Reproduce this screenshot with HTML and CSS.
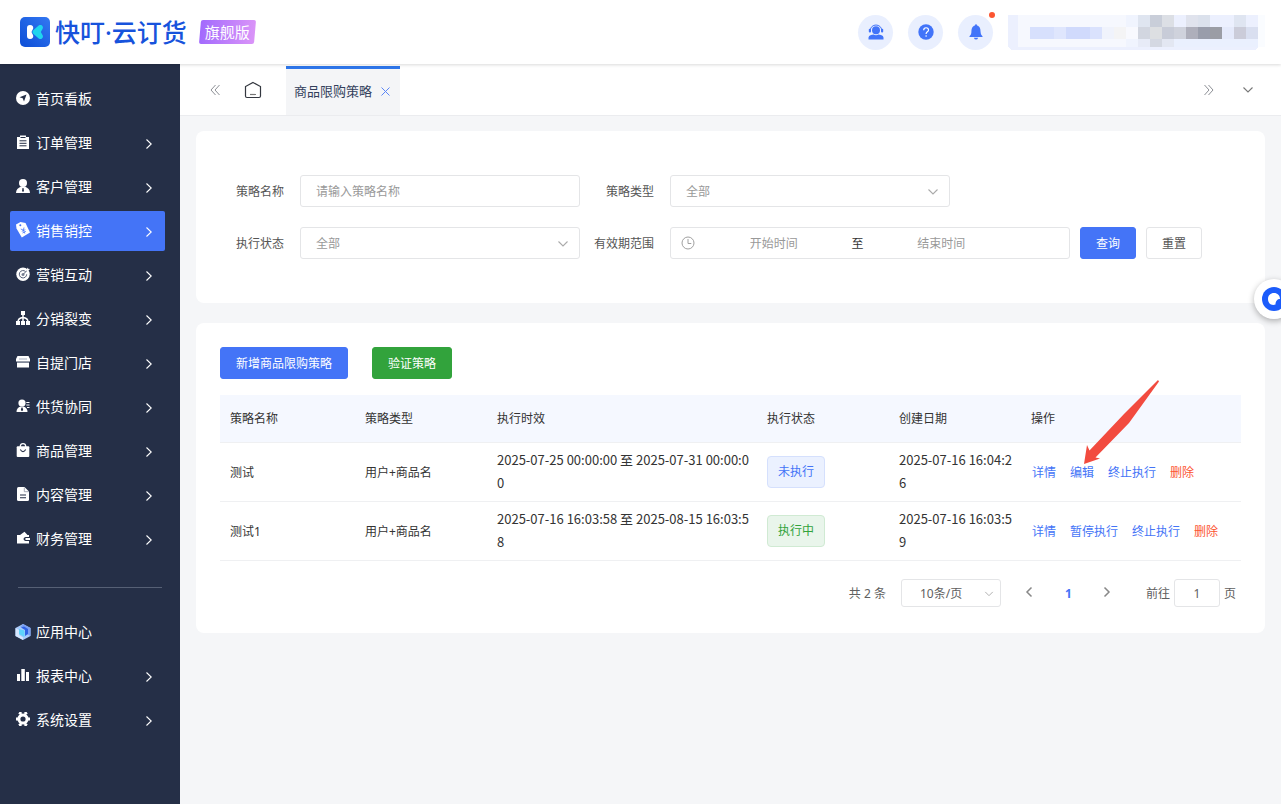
FILE: index.html
```html
<!DOCTYPE html>
<html lang="zh-CN">
<head>
    <meta charset="UTF-8">
    <meta name="viewport" content="width=device-width, initial-scale=1.0">
    <title>商品限购策略</title>
    <link rel="stylesheet" href="styles.css">
</head>
<body>
    <svg class="symbols" aria-hidden="true">
        <symbol id="arrow-right" viewBox="0 0 8 12"><path d="M1.5 1.5 L6.2 6 L1.5 10.5" fill="none" stroke="currentColor" stroke-width="1.1"/></symbol>
        <symbol id="arrow-down" viewBox="0 0 12 8"><path d="M1.5 1.5 L6 6 L10.5 1.5" fill="none" stroke="currentColor" stroke-width="1.1"/></symbol>
    </svg>

    <header class="header">
        <a class="brand" href="#">
            <svg class="brand-logo" viewBox="0 0 30 30">
                <defs>
                    <linearGradient id="logoBg" x1="1" y1="0" x2="0" y2="1">
                        <stop offset="0" stop-color="#3378f2"/>
                        <stop offset="1" stop-color="#0d4ed6"/>
                    </linearGradient>
                </defs>
                <rect width="30" height="30" rx="5" fill="url(#logoBg)"/>
                <path d="M10 8 C12.5 8 13.5 9.5 13.2 11.5 L11.5 15 L13.2 18.5 C13.5 20.5 12.5 22 10 22 C8 22 7 20.8 7 19 V11 C7 9.2 8 8 10 8 Z" fill="#fff"/>
                <path d="M19 8.3 C21.5 7 24 9.5 22.5 12 L20.8 15 L22.5 18 C24 20.5 21.5 23 19 21.7 L13.5 17 C12 15.6 12 14.4 13.5 13 Z" fill="#1fd5ee"/>
            </svg>
            <span class="brand-name">快叮·云订货</span>
            <span class="brand-badge">旗舰版</span>
        </a>
        <div class="header-tools">
            <button class="tool" aria-label="客服">
                <svg width="16" height="16" viewBox="0 0 16 16" fill="#4274f9">
                    <circle cx="8" cy="6.2" r="4"/>
                    <path d="M2.3 6.5 C2.3 -0.8 13.7 -0.8 13.7 6.5" fill="none" stroke="#4274f9" stroke-width="1"/>
                    <rect x="0.8" y="4.8" width="2.2" height="3.6" rx="1"/><rect x="13" y="4.8" width="2.2" height="3.6" rx="1"/>
                    <path d="M0.5 15.5 V13.5 Q0.5 11.5 3 11 L5.5 10.5 Q8 12 10.5 10.5 L13 11 Q15.5 11.5 15.5 13.5 V15.5 Z"/>
                </svg>
            </button>
            <button class="tool" aria-label="帮助">
                <svg width="16" height="16" viewBox="0 0 16 16">
                    <circle cx="8" cy="8" r="7.7" fill="#4274f9"/>
                    <path d="M5.7 6.2 C5.7 3 10.5 3 10.5 6 C10.5 7.8 8.1 7.9 8.1 9.9" fill="none" stroke="#fff" stroke-width="1.2"/>
                    <circle cx="8.1" cy="12" r="0.8" fill="#fff"/>
                </svg>
            </button>
            <button class="tool" aria-label="消息">
                <svg width="16" height="16" viewBox="0 0 16 16" fill="#4274f9">
                    <path d="M8 0.3 Q9 0.3 9 1.5 C12 2.2 12.5 5 12.6 8 C12.7 10 13.2 11 14.5 12.2 V13 H1.5 V12.2 C2.8 11 3.3 10 3.4 8 C3.5 5 4 2.2 7 1.5 Q7 0.3 8 0.3 Z"/>
                    <path d="M5.8 13.7 H10.2 Q9.5 15.6 8 15.6 Q6.5 15.6 5.8 13.7 Z"/>
                </svg>
                <span class="tool-dot"></span>
            </button>
            <svg class="account" width="257" height="35" viewBox="0 0 257 35" shape-rendering="crispEdges">
                <path d="M0 0 H250 V32 L247 35 H4 L0 32 Z" fill="#ecf0fe"/>
                <rect x="10" y="0" width="108" height="32" fill="#f6f8fe"/>
                <rect x="118" y="0" width="12" height="12" fill="#f0f4fe"/>
                <rect x="118" y="24" width="12" height="8" fill="#f0f4fe"/>
                <rect x="22" y="12" width="24" height="12" fill="#d7e0fd"/>
                <rect x="46" y="12" width="12" height="12" fill="#dfe6fd"/>
                <rect x="58" y="12" width="36" height="12" fill="#d0dafc"/>
                <rect x="82" y="12" width="12" height="12" fill="#dae2fd"/>
                <rect x="94" y="12" width="12" height="12" fill="#f0f3fc"/>
                <rect x="106" y="12" width="12" height="12" fill="#f4f4f5"/>
                <rect x="118" y="12" width="12" height="12" fill="#f8f9fe"/>
                <rect x="130" y="0" width="12" height="12" fill="#dfe5f0"/>
                <rect x="142" y="0" width="12" height="12" fill="#c9ced9"/>
                <rect x="154" y="0" width="12" height="12" fill="#dcdfe5"/>
                <rect x="178" y="0" width="12" height="12" fill="#e0e3ed"/>
                <rect x="190" y="0" width="12" height="12" fill="#dbe1ec"/>
                <rect x="226" y="0" width="12" height="12" fill="#dfe5f1"/>
                <rect x="130" y="12" width="12" height="12" fill="#d2d6e0"/>
                <rect x="142" y="12" width="12" height="12" fill="#dddfe2"/>
                <rect x="154" y="12" width="12" height="12" fill="#c8ccd8"/>
                <rect x="166" y="12" width="12" height="12" fill="#cfd2dc"/>
                <rect x="178" y="12" width="12" height="12" fill="#aeafbb"/>
                <rect x="190" y="12" width="12" height="12" fill="#999dab"/>
                <rect x="202" y="12" width="12" height="12" fill="#9b9da5"/>
                <rect x="214" y="12" width="12" height="12" fill="#e5eafb"/>
                <rect x="226" y="12" width="12" height="12" fill="#cbccd9"/>
                <rect x="238" y="12" width="12" height="12" fill="#d9dff0"/>
                <rect x="130" y="24" width="12" height="8" fill="#e7ebf7"/>
                <rect x="142" y="24" width="12" height="8" fill="#d4d8e2"/>
                <rect x="154" y="24" width="12" height="8" fill="#e3e7f2"/>
                <rect x="166" y="24" width="84" height="8" fill="#eaf0fe"/>
                <rect x="250" y="0" width="7" height="32" fill="#fafcff"/>
            </svg>
        </div>
    </header>

    <div class="body">
        <nav class="sidebar">
            <a class="menu-item" href="#">
                <svg class="menu-icon" viewBox="0 0 14 14"><circle cx="7" cy="7" r="7" fill="#fff"/><path d="M10.5 3.5 L8 10.5 L6.7 7.3 L3.5 6.2 Z" fill="#252f47"/></svg>
                首页看板
            </a>
            <a class="menu-item" href="#">
                <svg class="menu-icon" viewBox="0 0 14 14"><path d="M1 2 H4 V0.5 H10 V2 H13 V14 H1 Z" fill="#fff"/><path d="M4.5 2.5 H9.5 M3.5 5.8 H10.5 M3.5 8.3 H10.5 M3.5 10.8 H10.5" stroke="#252f47"/></svg>
                订单管理
                <svg class="menu-arrow"><use href="#arrow-right"/></svg>
            </a>
            <a class="menu-item" href="#">
                <svg class="menu-icon" viewBox="0 0 14 14"><circle cx="7" cy="4" r="4" fill="#fff"/><path d="M0 14 C0 10.5 2 9 5 7.5 H9 C12 9 14 10.5 14 14 Z" fill="#fff"/><path d="M6.5 9 H7.5 L8 12 L7 13 L6 12 Z" fill="#252f47"/></svg>
                客户管理
                <svg class="menu-arrow"><use href="#arrow-right"/></svg>
            </a>
            <a class="menu-item active" href="#">
                <svg class="menu-icon menu-icon-tag" viewBox="0 0 14 16"><path d="M0 2.5 L4.5 0 L9.5 1 L14 10.5 L5.8 15.5 L0.5 6.5 Z" fill="#fff"/><circle cx="4.3" cy="3.3" r="1" fill="#4474f7"/><path d="M4.8 7 L7.4 8.2 L8 5.5 M7.4 8.2 L8.8 11.5 M5.8 9.3 L9.3 7.7 M6.5 11 L9.9 9.4" stroke="#4474f7" stroke-width="0.8" fill="none"/></svg>
                销售销控
                <svg class="menu-arrow"><use href="#arrow-right"/></svg>
            </a>
            <a class="menu-item" href="#">
                <svg class="menu-icon" viewBox="0 0 14 14"><circle cx="7" cy="7.3" r="6.7" fill="#fff"/><path d="M9.5 4.5 A3.7 3.7 0 1 0 10.7 7.3" fill="none" stroke="#59627a" stroke-width="1"/><circle cx="7" cy="7.5" r="1.5" fill="#7d8597"/><path d="M7 7.5 L13 1.5" stroke="#59627a"/><path d="M10 3 L12 0.5 L12.3 2 L14 2.3 L11.5 4.5 Z" fill="#fff"/></svg>
                营销互动
                <svg class="menu-arrow"><use href="#arrow-right"/></svg>
            </a>
            <a class="menu-item" href="#">
                <svg class="menu-icon" viewBox="0 0 14 14" fill="#fff"><rect x="5" y="0" width="4" height="4"/><rect x="0" y="10" width="4" height="4"/><rect x="5" y="10" width="4" height="4"/><rect x="10" y="10" width="4" height="4"/><path d="M7 3 V11 M2 11 Q2 7 7 6.5 Q12 7 12 11" fill="none" stroke="#fff" stroke-width="1.5"/></svg>
                分销裂变
                <svg class="menu-arrow"><use href="#arrow-right"/></svg>
            </a>
            <a class="menu-item" href="#">
                <svg class="menu-icon" viewBox="0 0 14 14"><path d="M1.5 1 H12.5 L14 4 V6.5 H0 V4 Z M1 8 H13 V12.5 H1 Z" fill="#fff"/><path d="M1 7.2 H13" stroke="#aab0bd"/><path d="M3 4 H11" stroke="#a9b0bf"/></svg>
                自提门店
                <svg class="menu-arrow"><use href="#arrow-right"/></svg>
            </a>
            <a class="menu-item" href="#">
                <svg class="menu-icon" viewBox="0 0 14 14"><circle cx="6" cy="4" r="3.6" fill="#fff"/><path d="M0.5 13 C0.5 10 2 8.5 4.500 7.5 H7.5 C10 8.5 11.5 10 11.5 13 Z" fill="#fff"/><path d="M5.5 8.5 H6.5 L7.2 11 L6 12.2 L4.8 11 Z" fill="#252f47"/><path d="M10.3 3.5 H13.5 M10.3 6 H13.5 M11 8.5 H13.5" stroke="#fff" stroke-width="1.2"/></svg>
                供货协同
                <svg class="menu-arrow"><use href="#arrow-right"/></svg>
            </a>
            <a class="menu-item" href="#">
                <svg class="menu-icon" viewBox="0 0 14 14"><rect x="0.7" y="3.3" width="12.6" height="10.7" rx="1" fill="#fff"/><path d="M4.3 4 V3 Q4.5 0.7 7 0.7 Q9.5 0.7 9.7 3 V4" fill="none" stroke="#fff" stroke-width="1.3"/><path d="M4.3 6.5 Q7 10.8 9.7 6.5" fill="none" stroke="#252f47" stroke-width="1.2"/></svg>
                商品管理
                <svg class="menu-arrow"><use href="#arrow-right"/></svg>
            </a>
            <a class="menu-item" href="#">
                <svg class="menu-icon" viewBox="0 0 14 14"><path d="M2.5 0 H8.5 L13 4.5 V12.5 Q13 14 11.5 14 H2.5 Q1 14 1 12.5 V1.5 Q1 0 2.5 0 Z" fill="#fff"/><path d="M8.3 0.5 V4.7 H12.8" fill="none" stroke="#8f96a5" stroke-width="0.8"/><path d="M4 8 H10 M4 10.7 H10" stroke="#252f47" stroke-width="1.1"/></svg>
                内容管理
                <svg class="menu-arrow"><use href="#arrow-right"/></svg>
            </a>
            <a class="menu-item" href="#">
                <svg class="menu-icon" viewBox="0 0 14 14"><path d="M1 4 H4 L8.5 0.8 L11.5 4 H13 V6 H9.5 Q7.5 6.5 7.5 8 Q7.5 9.5 9.5 10 H13 V12.5 H1 Z" fill="#fff"/><path d="M9.8 7 H14 V9 H9.8 Q8.5 8 9.8 7 Z" fill="#fff"/></svg>
                财务管理
                <svg class="menu-arrow"><use href="#arrow-right"/></svg>
            </a>

            <hr class="menu-line">

            <a class="menu-item" href="#">
                <svg class="menu-icon menu-icon-app" viewBox="0 0 16 16"><path d="M8 0 L15.5 4 V12 L8 16 L0.5 12 V4 Z" fill="#a9cbfb"/><path d="M8 0 L15.5 4 V12 L12 10 V5 L5 3 Z" fill="#7ba0f3"/><path d="M6 3.5 L9 2.5 L13 5 V10 L10 12 V6 Z" fill="#2f62e4"/><path d="M4 5 L9.5 6.5 V13 L4 10 Z" fill="#5ed3fb"/><path d="M0.5 4 L4 6 V11 L8 13.5 V16 L0.5 12 Z" fill="#d5e6fd"/></svg>
                应用中心
            </a>
            <a class="menu-item" href="#">
                <svg class="menu-icon" viewBox="0 0 14 14" fill="#fff"><rect x="1" y="6" width="3" height="7"/><rect x="5.3" y="1" width="3.5" height="12"/><rect x="10" y="4" width="3" height="9"/></svg>
                报表中心
                <svg class="menu-arrow"><use href="#arrow-right"/></svg>
            </a>
            <a class="menu-item" href="#">
                <svg class="menu-icon" viewBox="0 0 14 14"><circle cx="7" cy="7" r="4.1" fill="none" stroke="#fff" stroke-width="3"/><path d="M3 0.6 L5.5 2 M11 0.6 L8.5 2 M3 13.4 L5.5 12 M11 13.4 L8.5 12 M0 7 H2 M12 7 H14" stroke="#fff" stroke-width="2.8"/></svg>
                系统设置
                <svg class="menu-arrow"><use href="#arrow-right"/></svg>
            </a>
        </nav>

        <main class="main">
            <div class="tabs">
                <button class="tab-btn" aria-label="向左">
                    <svg width="10" height="12" viewBox="0 0 10 12"><path d="M5.5 1 L1 6 L5.5 11 M9.5 1 L5 6 L9.5 11" fill="none" stroke="#8d9096"/></svg>
                </button>
                <button class="tab-btn tab-home" aria-label="首页">
                    <svg width="18" height="18" viewBox="0 0 18 18"><path d="M9 1.5 L16.5 5.5 V15 Q16.5 16.5 15 16.5 H3 Q1.5 16.5 1.5 15 V5.5 Z" fill="none" stroke="#33373f" stroke-width="1.2"/><path d="M6 13.5 H12" stroke="#777" stroke-width="1.2"/></svg>
                </button>
                <div class="tab">
                    <span>商品限购策略</span>
                    <button class="tab-close" aria-label="关闭">
                        <svg width="9" height="9" viewBox="0 0 9 9"><path d="M0.5 0.5 L8.5 8.5 M8.5 0.5 L0.5 8.5" stroke="#5b86f7"/></svg>
                    </button>
                </div>
                <div class="tabs-right">
                    <button class="tab-btn" aria-label="向右">
                        <svg width="10" height="12" viewBox="0 0 10 12"><path d="M0.5 1 L5 6 L0.5 11 M4.5 1 L9 6 L4.5 11" fill="none" stroke="#8d9096"/></svg>
                    </button>
                    <button class="tab-btn tab-more" aria-label="更多">
                        <svg width="12" height="8"><use href="#arrow-down"/></svg>
                    </button>
                </div>
            </div>

            <div class="content">
                <form class="card filter">
                    <div class="filter-row">
                        <label class="filter-label" for="name">策略名称</label>
                        <input class="control" type="text" id="name" placeholder="请输入策略名称">
                        <label class="filter-label second" for="type">策略类型</label>
                        <div class="select-box">
                            <select class="control" id="type"><option>全部</option></select>
                            <svg class="select-arrow"><use href="#arrow-down"/></svg>
                        </div>
                    </div>
                    <div class="filter-row">
                        <label class="filter-label" for="status">执行状态</label>
                        <div class="select-box">
                            <select class="control" id="status"><option>全部</option></select>
                            <svg class="select-arrow"><use href="#arrow-down"/></svg>
                        </div>
                        <label class="filter-label second" for="start">有效期范围</label>
                        <div class="range">
                            <svg class="range-icon" width="14" height="14" viewBox="0 0 14 14" fill="none" stroke="#a0a0a0"><circle cx="7" cy="7" r="6"/><path d="M7 3 V7.5 H10.3"/></svg>
                            <input type="text" id="start" placeholder="开始时间">
                            <span>至</span>
                            <input type="text" placeholder="结束时间" aria-label="结束时间">
                        </div>
                        <button class="btn primary" type="button">查询</button>
                        <button class="btn" type="reset">重置</button>
                    </div>
                </form>

                <section class="card list">
                    <div class="list-tools">
                        <button class="btn primary">新增商品限购策略</button>
                        <button class="btn success">验证策略</button>
                    </div>

                    <table>
                        <colgroup>
                            <col class="col-name"><col class="col-type"><col class="col-period"><col class="col-status"><col class="col-created"><col class="col-action">
                        </colgroup>
                        <thead>
                            <tr>
                                <th>策略名称</th>
                                <th>策略类型</th>
                                <th>执行时效</th>
                                <th>执行状态</th>
                                <th>创建日期</th>
                                <th>操作</th>
                            </tr>
                        </thead>
                        <tbody>
                            <tr>
                                <td>测试</td>
                                <td>用户+商品名</td>
                                <td class="time">2025-07-25 00:00:00 至 2025-07-31 00:00:00</td>
                                <td><span class="tag waiting">未执行</span></td>
                                <td class="time">2025-07-16 16:04:26</td>
                                <td>
                                    <div class="actions">
                                        <a href="#">详情</a>
                                        <a href="#">编辑</a>
                                        <a href="#">终止执行</a>
                                        <a class="danger" href="#">删除</a>
                                    </div>
                                </td>
                            </tr>
                            <tr>
                                <td>测试1</td>
                                <td>用户+商品名</td>
                                <td class="time">2025-07-16 16:03:58 至 2025-08-15 16:03:58</td>
                                <td><span class="tag running">执行中</span></td>
                                <td class="time">2025-07-16 16:03:59</td>
                                <td>
                                    <div class="actions">
                                        <a href="#">详情</a>
                                        <a href="#">暂停执行</a>
                                        <a href="#">终止执行</a>
                                        <a class="danger" href="#">删除</a>
                                    </div>
                                </td>
                            </tr>
                        </tbody>
                    </table>

                    <div class="pagination">
                        <span>共 2 条</span>
                        <div class="select-box page-size">
                            <select class="control" aria-label="每页条数"><option>10条/页</option></select>
                            <svg class="select-arrow"><use href="#arrow-down"/></svg>
                        </div>
                        <div class="pager">
                            <button aria-label="上一页"><svg width="8" height="12" viewBox="0 0 8 12"><path d="M6.5 1.5 L2 6 L6.5 10.5" fill="none" stroke="#888" stroke-width="1.5"/></svg></button>
                            <button class="current">1</button>
                            <button aria-label="下一页"><svg width="8" height="12" viewBox="0 0 8 12"><path d="M1.5 1.5 L6 6 L1.5 10.5" fill="none" stroke="#888" stroke-width="1.5"/></svg></button>
                        </div>
                        <label class="jump">前往 <input class="control" type="text" value="1"> 页</label>
                    </div>

                    <!-- pointer to the edit link -->
                    <svg class="pointer" viewBox="0 0 76 84"><path d="M75 0 L76 1.5 L46 43 L12.500 77.5 L17 78.5 L1 84 L4 65 L6.5 70.5 L41 34 Z" fill="#f24b3f"/></svg>
                </section>
            </div>
        </main>
    </div>

    <button class="float-btn" aria-label="在线客服">
        <svg width="26" height="26" viewBox="0 0 26 26"><circle cx="13" cy="13" r="12" fill="#1c5cfb"/><path d="M13 7 C16.5 7 19 9.5 19 13 C16.5 13 14.5 15 14.5 18.5 C10 20 7 17 7 13 C7 9.5 9.5 7 13 7 Z" fill="#fff"/></svg>
    </button>
</body>
</html>
```
FILE: styles.css
```css
* {
    box-sizing: border-box;
}

body {
    margin: 0;
    min-height: 100vh;
    display: flex;
    flex-direction: column;
    background-color: #f5f6f8;
    color: #333;
    font-family: "Noto Sans", "Noto Sans CJK SC", sans-serif;
    font-size: 12px;
    overflow-x: hidden;
}

a {
    text-decoration: none;
}

button, input, select {
    font-family: inherit;
    font-size: 12px;
}

button {
    border: none;
    background: none;
    padding: 0;
    cursor: pointer;
}

.symbols {
    display: none;
}

/* header */
.header {
    position: relative;
    z-index: 2;
    display: flex;
    align-items: center;
    justify-content: space-between;
    height: 64px;
    padding: 0 16px 0 20px;
    background-color: #fff;
    box-shadow: 0 1px 3px rgba(0, 0, 0, 0.15);
}

.brand {
    display: flex;
    align-items: center;
}

.brand-logo {
    width: 30px;
    height: 30px;
}

.brand-name {
    margin-left: 5px;
    color: #1753dc;
    font-size: 25px;
    font-weight: 500;
    line-height: 30px;
}

.brand-badge {
    position: relative;
    z-index: 0;
    margin-left: 13px;
    padding: 0 5px;
    color: #fff;
    font-size: 15px;
    line-height: 24px;
}

.brand-badge::before {
    content: "";
    position: absolute;
    inset: 0;
    z-index: -1;
    border-radius: 2px;
    background: linear-gradient(90deg, #a26afd, #da94f8);
    transform: skewX(-5deg);
}

.header-tools {
    display: flex;
    align-items: center;
    gap: 15px;
}

.tool {
    position: relative;
    display: flex;
    align-items: center;
    justify-content: center;
    width: 35px;
    height: 35px;
    border-radius: 50%;
    background-color: #e9effe;
}

.tool-dot {
    position: absolute;
    top: -3px;
    right: -2px;
    width: 6px;
    height: 6px;
    border-radius: 50%;
    background-color: #fc5531;
}

/* layout */
.body {
    flex: 1;
    display: flex;
}

.sidebar {
    flex: none;
    width: 180px;
    padding: 15px 15px 15px 10px;
    background-color: #252f47;
}

.menu-item {
    display: flex;
    align-items: center;
    height: 40px;
    margin-bottom: 4px;
    padding: 0 12px 2px 6px;
    border-radius: 2px;
    color: #fff;
    font-size: 14px;
}

.menu-item.active {
    background-color: #4474f7;
}

.menu-icon {
    width: 14px;
    height: 14px;
    margin-right: 6px;
}

.menu-icon-tag {
    height: 16px;
}

.menu-icon-app {
    width: 16px;
    height: 16px;
    margin: 2px 5px 0 -1px;
}

.menu-arrow {
    width: 8px;
    height: 12px;
    margin: 4px 0 0 auto;
}

.menu-line {
    height: 1px;
    margin: 28px 3px 24px 8px;
    border: none;
    background-color: #566075;
}

.main {
    flex: 1;
    min-width: 0;
}

.tabs {
    display: flex;
    align-items: center;
    height: 52px;
    padding: 0 27px 0 30px;
    border-bottom: 1px solid #ebecef;
    background-color: #fff;
}

.tab-btn {
    display: flex;
}

.tab-home {
    margin: 0 24px;
}

.tab-more {
    color: #777;
}

.tab {
    display: flex;
    align-items: center;
    align-self: flex-end;
    gap: 9px;
    height: 49px;
    padding: 0 10px 4px 8px;
    border-top: 3px solid #2e76ea;
    background-color: #f4f5f7;
    color: #333f5c;
    font-size: 13px;
}

.tab-close {
    display: flex;
    padding-top: 2px;
}

.tabs-right {
    display: flex;
    align-items: center;
    gap: 28px;
    margin-left: auto;
}

.content {
    padding: 15px 16px;
}

.card {
    border-radius: 8px;
    background-color: #fff;
}

/* filter form */
.filter {
    display: flex;
    flex-direction: column;
    gap: 20px;
    margin-bottom: 20px;
    padding: 44px 24px;
}

.filter-row {
    display: flex;
    align-items: center;
}

.filter-label {
    width: 80px;
    padding-right: 16px;
    color: #555;
    text-align: right;
}

.filter-label.second {
    margin-left: 10px;
}

.control {
    width: 280px;
    height: 32px;
    padding: 0 15px;
    border: 1px solid #e4e5e7;
    border-radius: 3px;
    background-color: #fff;
    color: #999;
    outline: none;
}

.control::placeholder, .range input::placeholder {
    color: #999;
}

.select-box {
    position: relative;
}

.select-box .control {
    display: block;
    appearance: none;
}

.select-arrow {
    position: absolute;
    top: 50%;
    right: 11px;
    width: 12px;
    height: 8px;
    margin-top: -3px;
    color: #aaa;
    pointer-events: none;
}

.range {
    display: flex;
    align-items: center;
    width: 400px;
    height: 32px;
    padding: 0 52px 0 10px;
    border: 1px solid #e4e5e7;
    border-radius: 3px;
}

.range-icon {
    flex: none;
    margin-right: 3px;
}

.range span {
    padding: 0 2px;
}

.range input {
    flex: 1;
    min-width: 0;
    border: none;
    outline: none;
    text-align: center;
}

.btn {
    height: 32px;
    padding: 0 15px;
    border: 1px solid #e4e5e7;
    border-radius: 3px;
    background-color: #fff;
    color: #555;
}

.filter .btn {
    margin-left: 10px;
}

.btn.primary {
    border-color: #4474f7;
    background-color: #4474f7;
    color: #fff;
}

.btn.success {
    border-color: #32a33c;
    background-color: #32a33c;
    color: #fff;
}

/* list */
.list {
    position: relative;
    padding: 24px 24px 26px;
}

.list-tools {
    display: flex;
    gap: 24px;
    margin-bottom: 16px;
}

table {
    width: 100%;
    border-collapse: separate;
    border-spacing: 0;
    table-layout: fixed;
}

.col-name {
    width: 135px;
}

.col-type, .col-status, .col-created {
    width: 132px;
}

.col-period {
    width: 270px;
}

th, td {
    padding: 0 5px 0 10px;
    border-bottom: 1px solid #eff0f2;
    line-height: 23px;
    text-align: left;
    word-break: break-all;
}

th {
    height: 48px;
    background-color: #f5f8ff;
    font-weight: normal;
}

td {
    height: 59px;
}

.time {
    padding-bottom: 2px;
    font-family: "Noto Sans CJK SC", sans-serif;
    font-size: 13px;
}

.tag {
    display: inline-block;
    height: 32px;
    padding: 0 10px;
    border: 1px solid;
    border-radius: 4px;
    line-height: 30px;
    vertical-align: middle;
}

.tag.waiting {
    border-color: #d5e0fd;
    background-color: #ebf1ff;
    color: #4474f7;
}

.tag.running {
    border-color: #d0ead3;
    background-color: #e9f5eb;
    color: #32a33c;
}

.actions {
    display: flex;
    gap: 14px;
    padding-left: 1px;
    white-space: nowrap;
}

.actions a {
    color: #4474f7;
}

.actions .danger {
    color: #fc5531;
}

.pagination {
    display: flex;
    align-items: center;
    justify-content: flex-end;
    margin-top: 18px;
    padding-right: 5px;
    color: #606060;
}

.pagination .control {
    height: 28px;
    color: #606060;
}

.page-size {
    margin: 0 9px 0 15px;
}

.page-size .control {
    width: 100px;
    padding: 0 18px;
}

.page-size .select-arrow {
    right: 7px;
    width: 10px;
}

.pager {
    display: flex;
}

.pager button {
    width: 39px;
    height: 28px;
}

.pager .current {
    color: #4474f7;
    font-weight: bold;
}

.jump {
    display: flex;
    align-items: center;
    gap: 4px;
    margin-left: 19px;
}

.jump .control {
    width: 46px;
    padding: 0;
    text-align: center;
}

.pointer {
    position: absolute;
    top: 57px;
    right: 106px;
    width: 76px;
    height: 84px;
    pointer-events: none;
}

.float-btn {
    position: fixed;
    top: 279px;
    right: -13px;
    z-index: 3;
    display: flex;
    align-items: center;
    justify-content: center;
    width: 40px;
    height: 40px;
    border-radius: 50%;
    background-color: #fff;
    box-shadow: 0 2px 6px rgba(0, 0, 0, 0.3);
}
```
